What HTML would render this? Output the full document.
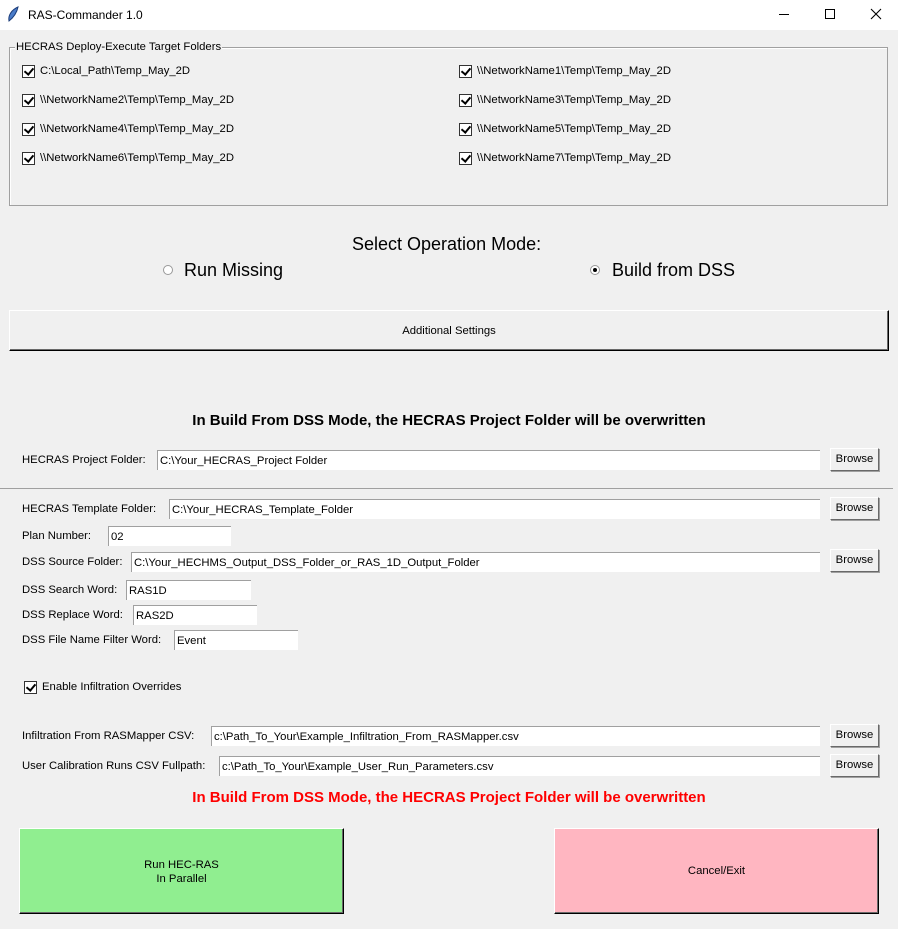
<!DOCTYPE html>
<html><head><meta charset="utf-8"><style>
*{box-sizing:border-box;margin:0;padding:0}
body{width:898px;height:929px;background:#f0f0f0;position:relative;overflow:hidden;font-family:"Liberation Sans",sans-serif;font-size:11.3px;color:#000}
.a{position:absolute;white-space:nowrap}
.tb{position:absolute;left:0;top:0;width:898px;height:30px;background:#fff}
.cb{position:absolute;width:13px;height:13px;border:1px solid #333;background:#fff}
.cb:after{content:"";position:absolute;left:3px;top:0px;width:4px;height:7px;border:solid #000;border-width:0 2px 2px 0;transform:rotate(40deg)}
.en{position:absolute;height:20px;background:#fff;border-top:1px solid #a0a0a0;border-left:1px solid #a0a0a0;padding:3px 2px 0;line-height:15px}
.br{position:absolute;left:830px;width:49px;height:23px;background:#f0f0f0;border:1px solid;border-color:#fff #696969 #696969 #fff;box-shadow:1px 1px 0 #a0a0a0;text-align:center;line-height:21px}
.big{position:absolute;border:1px solid;border-color:#fff #000 #000 #fff;box-shadow:inset -1px -1px 0 #696969;text-align:center}
</style></head><body>
<div class="tb"></div>
<svg class="a" style="left:6px;top:6px" width="14" height="16" viewBox="0 0 14 16"><path d="M3 15 C2 10 5 4 12 1 C11 6 8 11 3 15Z" fill="#4a7cc9" stroke="#1c3d7a" stroke-width="1"/></svg>
<div class="a" style="left:28px;top:8px;font-size:12px">RAS-Commander 1.0</div>
<div class="a" style="left:779px;top:14px;width:10px;height:1px;background:#000"></div>
<div class="a" style="left:825px;top:9px;width:10px;height:10px;border:1px solid #000"></div>
<svg class="a" style="left:870px;top:8px" width="12" height="12" viewBox="0 0 12 12"><path d="M1 1L11 11M11 1L1 11" stroke="#000" stroke-width="1.1"/></svg>

<div class="a" style="left:9px;top:47px;width:879px;height:159px;border:1px solid #a0a0a0;box-shadow:1px 1px 0 #fff inset"></div>
<div class="a" style="left:15px;top:41px;background:#f0f0f0;padding:0 1px">HECRAS Deploy-Execute Target Folders</div>

<div class="cb" style="left:22px;top:65px"></div><div class="a" style="left:40px;top:65px">C:\Local_Path\Temp_May_2D</div>
<div class="cb" style="left:22px;top:94px"></div><div class="a" style="left:40px;top:94px">\\NetworkName2\Temp\Temp_May_2D</div>
<div class="cb" style="left:22px;top:123px"></div><div class="a" style="left:40px;top:123px">\\NetworkName4\Temp\Temp_May_2D</div>
<div class="cb" style="left:22px;top:152px"></div><div class="a" style="left:40px;top:152px">\\NetworkName6\Temp\Temp_May_2D</div>
<div class="cb" style="left:459px;top:65px"></div><div class="a" style="left:477px;top:65px">\\NetworkName1\Temp\Temp_May_2D</div>
<div class="cb" style="left:459px;top:94px"></div><div class="a" style="left:477px;top:94px">\\NetworkName3\Temp\Temp_May_2D</div>
<div class="cb" style="left:459px;top:123px"></div><div class="a" style="left:477px;top:123px">\\NetworkName5\Temp\Temp_May_2D</div>
<div class="cb" style="left:459px;top:152px"></div><div class="a" style="left:477px;top:152px">\\NetworkName7\Temp\Temp_May_2D</div>

<div class="a" style="left:352px;top:234px;font-size:18px">Select Operation Mode:</div>
<div class="a" style="left:163px;top:265px;width:10px;height:10px;border-radius:50%;border:1px solid #999;background:#fff"></div>
<div class="a" style="left:184px;top:260px;font-size:18px">Run Missing</div>
<div class="a" style="left:590px;top:265px;width:10px;height:10px;border-radius:50%;border:1px solid #999;background:#fff"><div style="position:absolute;left:2px;top:2px;width:4px;height:4px;border-radius:50%;background:#000"></div></div>
<div class="a" style="left:612px;top:260px;font-size:18px">Build from DSS</div>

<div class="big" style="left:9px;top:310px;width:880px;height:41px;background:#f0f0f0;line-height:40px">Additional Settings</div>

<div class="a" style="left:0;top:412px;width:898px;text-align:center;font-weight:bold;font-size:15px">In Build From DSS Mode, the HECRAS Project Folder will be overwritten</div>

<div class="a" style="left:22px;top:454px">HECRAS Project Folder:</div>
<div class="en" style="left:157px;top:450px;width:663px">C:\Your_HECRAS_Project Folder</div>
<div class="br" style="top:448px">Browse</div>

<div class="a" style="left:0;top:488px;width:893px;height:1px;background:#a0a0a0"></div>

<div class="a" style="left:22px;top:503px">HECRAS Template Folder:</div>
<div class="en" style="left:169px;top:499px;width:651px">C:\Your_HECRAS_Template_Folder</div>
<div class="br" style="top:497px">Browse</div>
<div class="a" style="left:22px;top:530px">Plan Number:</div>
<div class="en" style="left:108px;top:526px;width:123px">02</div>
<div class="a" style="left:22px;top:556px">DSS Source Folder:</div>
<div class="en" style="left:131px;top:552px;width:689px">C:\Your_HECHMS_Output_DSS_Folder_or_RAS_1D_Output_Folder</div>
<div class="br" style="top:549px">Browse</div>
<div class="a" style="left:22px;top:584px">DSS Search Word:</div>
<div class="en" style="left:126px;top:580px;width:125px">RAS1D</div>
<div class="a" style="left:22px;top:609px">DSS Replace Word:</div>
<div class="en" style="left:133px;top:605px;width:124px">RAS2D</div>
<div class="a" style="left:22px;top:634px">DSS File Name Filter Word:</div>
<div class="en" style="left:174px;top:630px;width:124px">Event</div>

<div class="cb" style="left:24px;top:681px"></div><div class="a" style="left:42px;top:681px">Enable Infiltration Overrides</div>

<div class="a" style="left:22px;top:730px">Infiltration From RASMapper CSV:</div>
<div class="en" style="left:211px;top:726px;width:609px">c:\Path_To_Your\Example_Infiltration_From_RASMapper.csv</div>
<div class="br" style="top:724px">Browse</div>
<div class="a" style="left:22px;top:760px">User Calibration Runs CSV Fullpath:</div>
<div class="en" style="left:219px;top:756px;width:601px">c:\Path_To_Your\Example_User_Run_Parameters.csv</div>
<div class="br" style="top:754px">Browse</div>

<div class="a" style="left:0;top:789px;width:898px;text-align:center;font-weight:bold;font-size:15px;color:#f00">In Build From DSS Mode, the HECRAS Project Folder will be overwritten</div>

<div class="big" style="left:19px;top:828px;width:325px;height:86px;background:#90ee90;padding-top:29px;line-height:14px">Run HEC-RAS<br>In Parallel</div>
<div class="big" style="left:554px;top:828px;width:325px;height:86px;background:#ffb6c1;line-height:84px">Cancel/Exit</div>
</body></html>
